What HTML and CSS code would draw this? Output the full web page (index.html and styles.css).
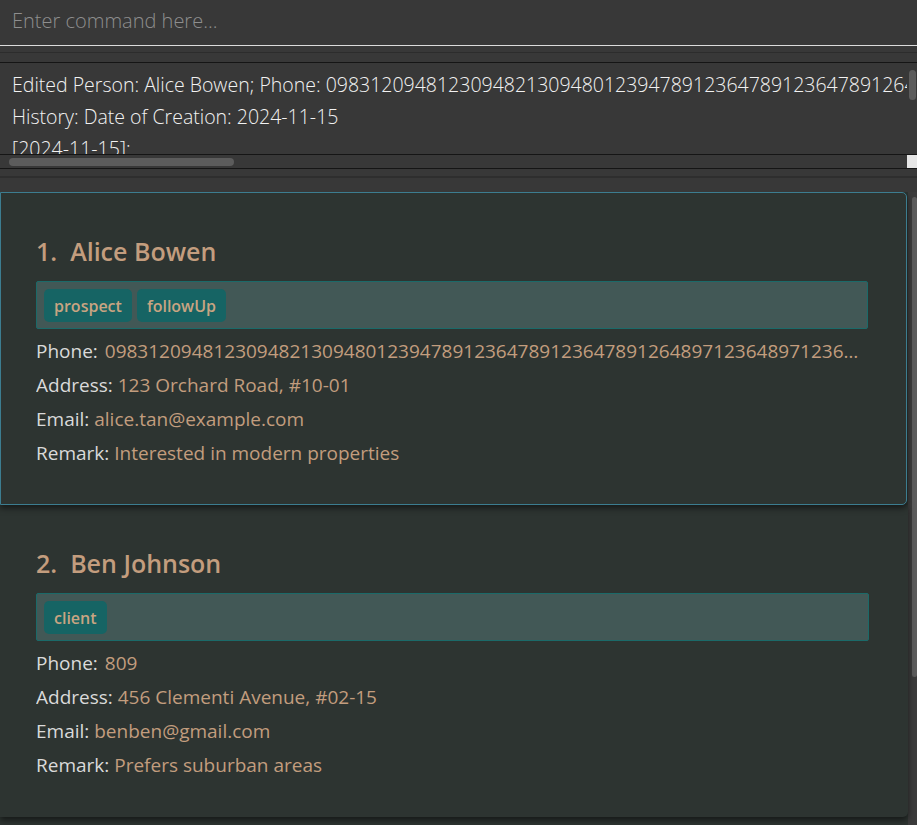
FILE: index.html
```html
<!DOCTYPE html>
<html lang="en">
<head>
<meta charset="utf-8">
<title>Address Book</title>
<link rel="stylesheet" href="styles.css">
</head>
<body>
<div class="app">
  <div class="cmd-pane">
    <div class="cmd-box">Enter command here...</div>
    <div class="cmd-gap"></div>
  </div>
  <div class="result-pane">
    <div class="result-grid">
      <div class="result-view">
        <div class="result-text">
          <div class="rline">Edited Person: Alice Bowen; Phone: 0983120948123094821309480123947891236478912364789126489712364897123648971236489712364; Address: 123 Orchard Road, #10-01</div>
          <div class="rline">History: Date of Creation: 2024-11-15</div>
          <div class="rline">[2024-11-15]:</div>
        </div>
      </div>
      <div class="vscroll"><div class="vthumb"></div></div>
      <div class="hscroll"><div class="hthumb"></div></div>
      <div class="corner"></div>
    </div>
    <div class="result-gap"></div>
  </div>
  <div class="list-pane">
    <div class="list">
      <div class="card selected">
        <div class="name">1.&nbsp; Alice Bowen</div>
        <div class="tags">
          <span class="tag">prospect</span>
          <span class="tag">followUp</span>
        </div>
        <div class="details">
          <div class="row"><span class="label phone">Phone:</span> <span class="value">0983120948123094821309480123947891236478912364789126489712364897123648971236489712364897123648971236</span></div>
          <div class="row"><span class="label">Address:</span> <span class="value">123 Orchard Road, #10-01</span></div>
          <div class="row"><span class="label">Email:</span> <span class="value">alice.tan@example.com</span></div>
          <div class="row"><span class="label">Remark:</span> <span class="value">Interested in modern properties</span></div>
        </div>
      </div>
      <div class="card">
        <div class="name">2.&nbsp; Ben Johnson</div>
        <div class="tags">
          <span class="tag">client</span>
        </div>
        <div class="details">
          <div class="row"><span class="label phone">Phone:</span> <span class="value">809</span></div>
          <div class="row"><span class="label">Address:</span> <span class="value">456 Clementi Avenue, #02-15</span></div>
          <div class="row"><span class="label">Email:</span> <span class="value">benben@gmail.com</span></div>
          <div class="row"><span class="label">Remark:</span> <span class="value">Prefers suburban areas</span></div>
        </div>
      </div>
    </div>
    <div class="list-scroll"><div class="list-thumb"></div></div>
  </div>
</div>
</body>
</html>
```

FILE: styles.css
```css
* { box-sizing: border-box; }
html, body { margin: 0; padding: 0; }
body {
  background: #383838;
  font-family: "Open Sans", "Noto Sans", sans-serif;
  width: 917px;
  height: 825px;
  overflow: hidden;
}
.app {
  display: flex;
  flex-direction: column;
  height: 825px;
}

/* command */
.cmd-box {
  height: 46px;
  padding-left: 12px;
  padding-bottom: 4px;
  display: flex;
  align-items: center;
  font-size: 20px;
  font-weight: 300;
  color: #8e8e8e;
  background: #383838;
  border-bottom: 1px solid #dcdcdc;
}
.cmd-gap {
  height: 16px;
  background: linear-gradient(#383838 0 6px, #2c2c2c 6px 7px, #383838 7px);
}

/* result */
.result-pane {
  border-top: 1px solid #151515;
}
.result-grid {
  display: grid;
  grid-template-columns: 1fr 10px;
  grid-template-rows: 92px 14px;
}
.result-view {
  overflow: hidden;
  border-bottom: 1px solid #151515;
}
.result-text {
  padding: 6px 0 0 12px;
  white-space: nowrap;
  color: #f2f2f2;
  font-size: 19.5px;
  font-weight: 300;
  line-height: 32px;
}
.vscroll {
  border-bottom: 1px solid #151515;
  padding: 7px 1px 0 2px;
}
.vthumb {
  height: 30px;
  background: #5c5c5c;
  border-radius: 4px;
}
.hscroll {
  padding: 3px 0 0 9px;
  border-bottom: 1px solid #151515;
}
.hthumb {
  width: 225px;
  height: 8px;
  background: #5c5c5c;
  border-radius: 4px;
}
.corner {
  background: #e6e6e6;
  border-bottom: 1px solid #151515;
}
.result-gap {
  height: 23px;
  background: linear-gradient(#383838 0 7px, #2e2e2e 7px 9px, #383838 9px);
}

/* list */
.list-pane {
  flex: 1;
  display: flex;
  background: #2d3431;
  overflow: hidden;
}
.list {
  width: 908px;
  display: flex;
  flex-direction: column;
}
.list-scroll {
  width: 9px;
  background: #3b3b3b;
  padding: 5px 0 0 4px;
}
.list-thumb {
  height: 480px;
  background: #5c5c5c;
  border-radius: 3px;
}
.card {
  position: relative;
  background: #2d3431;
  padding: 41px 39px 35px 36px;
  border-radius: 0 0 5px 0;
  box-shadow: 0 3px 6px rgba(0, 0, 0, 0.55);
}
.card.selected {
  z-index: 1;
  padding-left: 35px;
  padding-right: 38px;
  padding-bottom: 34px;
  border: 1px solid #3c7d90;
  border-radius: 0 5px 5px 0;
  width: 907px;
}
.name {
  height: 34px;
  line-height: 34px;
  font-size: 25px;
  font-weight: 600;
  color: #c39d7e;
}
.tags {
  margin-top: 13px;
  height: 48px;
  background: #425856;
  border: 1px solid #1b6a69;
  border-radius: 2px;
  padding: 7px 7px;
  display: flex;
  gap: 5px;
}
.tag {
  height: 33px;
  padding: 0 10px;
  display: flex;
  align-items: center;
  background: #166464;
  border-radius: 5px;
  color: #c9a482;
  font-size: 16px;
  font-weight: 600;
}
.details {
  margin-top: 5px;
}
.row {
  height: 34px;
  line-height: 34px;
  font-size: 19px;
  color: #c29d7e;
  white-space: nowrap;
  overflow: hidden;
  text-overflow: ellipsis;
}
.label { color: #dadada; }
.label.phone { margin-right: 2px; }
.value { color: #c29d7e; }
```
